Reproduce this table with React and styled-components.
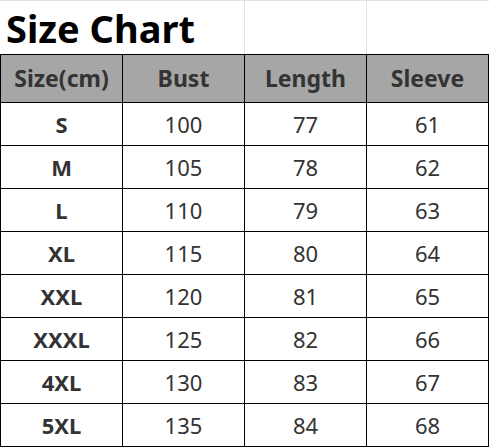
import React from "react";
import styled, { createGlobalStyle } from "styled-components";

const Global = createGlobalStyle`
  html, body { margin: 0; padding: 0; background: #fff; }
  body { font-family: "Noto Sans", "Open Sans", sans-serif; }
`;

const Page = styled.div`
  width: 489px;
  display: flex;
  flex-direction: column;
`;

const TitleRow = styled.div`
  display: grid;
  grid-template-columns: 245px 122px 122px;
  height: 54px;
  box-sizing: border-box;
  border-top: 1px solid #e2e2e2;
`;

const TitleCell = styled.div`
  box-sizing: border-box;
  border-right: ${(p) => (p.$last ? "none" : "1px solid #e2e2e2")};
  display: flex;
  align-items: center;
  padding-left: 6px;
`;

const Title = styled.h1`
  margin: 0;
  font-size: 38px;
  font-weight: 700;
  color: #000;
  line-height: 1;
  margin-top: 1px;
`;

const Table = styled.div`
  display: grid;
  grid-template-columns: repeat(4, 122px);
  border-left: 1px solid #000;
  border-top: 1px solid #000;
`;

const Cell = styled.div`
  box-sizing: border-box;
  height: ${(p) => (p.$head ? "48px" : "43px")};
  border-right: 1px solid #000;
  border-bottom: 1px solid #000;
  background: ${(p) => (p.$head ? "#a6a6a6" : "#fff")};
  color: #333;
  display: flex;
  align-items: center;
  justify-content: center;
  font-size: ${(p) => (p.$head ? "23px" : "22px")};
  font-weight: ${(p) => (p.$bold ? 700 : 400)};
  padding-bottom: 1px;
`;

const headers = ["Size(cm)", "Bust", "Length", "Sleeve"];
const rows = [
  ["S", 100, 77, 61],
  ["M", 105, 78, 62],
  ["L", 110, 79, 63],
  ["XL", 115, 80, 64],
  ["XXL", 120, 81, 65],
  ["XXXL", 125, 82, 66],
  ["4XL", 130, 83, 67],
  ["5XL", 135, 84, 68],
];

export default function App() {
  return (
    <Page>
      <Global />
      <TitleRow>
        <TitleCell>
          <Title>Size Chart</Title>
        </TitleCell>
        <TitleCell />
        <TitleCell $last />
      </TitleRow>
      <Table>
        {headers.map((h) => (
          <Cell key={h} $head $bold>
            {h}
          </Cell>
        ))}
        {rows.map((r) =>
          r.map((v, i) => (
            <Cell key={r[0] + i} $bold={i === 0}>
              {v}
            </Cell>
          ))
        )}
      </Table>
    </Page>
  );
}
